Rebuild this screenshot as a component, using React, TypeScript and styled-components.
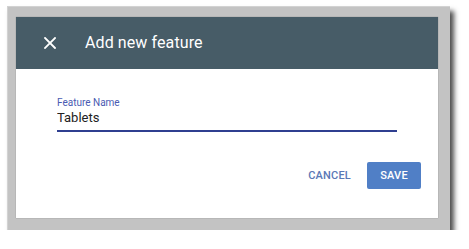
import React from "react";
import styled, { createGlobalStyle } from "styled-components";

const GlobalStyle = createGlobalStyle`
  html, body {
    margin: 0;
    padding: 0;
    background: #ffffff;
  }

  body {
    font-family: Roboto, "Noto Sans", Arial, sans-serif;
  }
`;

const Frame = styled.div`
  box-sizing: border-box;
  width: 443px;
  height: 224px;
  margin: 6px 0 0 7px;
  padding: 10px 12px 12px 8px;
  background: #c3c3c3;
  border-top: 1px solid #d2d2d2;
  border-left: 1px solid #d2d2d2;
  box-shadow: 4px 5px 5px rgba(0, 0, 0, 0.7);
`;

const Dialog = styled.div`
  display: flex;
  flex-direction: column;
  width: 422px;
  height: 201px;
  background: #ffffff;
  box-shadow: 0 0 1px rgba(0, 0, 0, 0.35);
`;

const Header = styled.div`
  display: flex;
  align-items: center;
  height: 52px;
  padding-left: 28px;
  background: #475c67;
  color: #ffffff;
`;

const CloseButton = styled.button`
  display: flex;
  align-items: center;
  justify-content: center;
  width: 12px;
  height: 12px;
  padding: 0;
  margin: 0 29px 0 0;
  border: none;
  background: transparent;
  cursor: pointer;
`;

const Title = styled.h2`
  margin: 0;
  font-size: 16px;
  font-weight: 400;
  line-height: 20px;
  letter-spacing: 0.1px;
`;

const Body = styled.div`
  display: flex;
  flex: 1;
  flex-direction: column;
  padding: 28px 41px 0 41px;
`;

const Field = styled.label`
  display: flex;
  flex-direction: column;
  border-bottom: 2px solid #2f3f90;
  padding-bottom: 2px;
`;

const FieldLabel = styled.span`
  font-size: 10px;
  line-height: 11px;
  color: #4a5bb2;
`;

const FieldInput = styled.input`
  height: 20px;
  padding: 0;
  margin: 0;
  border: none;
  outline: none;
  background: transparent;
  font-family: Roboto, "Noto Sans", Arial, sans-serif;
  font-size: 13px;
  line-height: 20px;
  color: #222222;
`;

const Actions = styled.div`
  display: flex;
  align-items: center;
  justify-content: flex-end;
  margin-top: 30px;
  margin-right: -24px;
`;

const TextButton = styled.button`
  height: 27px;
  padding: 0 8px;
  margin-right: 8px;
  border: none;
  background: transparent;
  font-family: Roboto, "Noto Sans", Arial, sans-serif;
  font-size: 11px;
  font-weight: 500;
  letter-spacing: 0.2px;
  color: #5a78b6;
  cursor: pointer;
`;

const PrimaryButton = styled.button`
  width: 54px;
  height: 27px;
  padding: 0;
  border: none;
  border-radius: 2px;
  background: #507fc6;
  font-family: Roboto, "Noto Sans", Arial, sans-serif;
  font-size: 11px;
  font-weight: 500;
  letter-spacing: 0.2px;
  color: #ffffff;
  cursor: pointer;
`;

const CloseIcon = () => (
  <svg width="12" height="12" viewBox="0 0 12 12">
    <path d="M1 1 L11 11 M11 1 L1 11" stroke="#ffffff" strokeWidth="1.8" strokeLinecap="square" />
  </svg>
);

export default function App() {
  return (
    <>
      <GlobalStyle />
      <Frame>
        <Dialog>
          <Header>
            <CloseButton aria-label="Close">
              <CloseIcon />
            </CloseButton>
            <Title>Add new feature</Title>
          </Header>
          <Body>
            <Field>
              <FieldLabel>Feature Name</FieldLabel>
              <FieldInput defaultValue="Tablets" />
            </Field>
            <Actions>
              <TextButton>CANCEL</TextButton>
              <PrimaryButton>SAVE</PrimaryButton>
            </Actions>
          </Body>
        </Dialog>
      </Frame>
    </>
  );
}
